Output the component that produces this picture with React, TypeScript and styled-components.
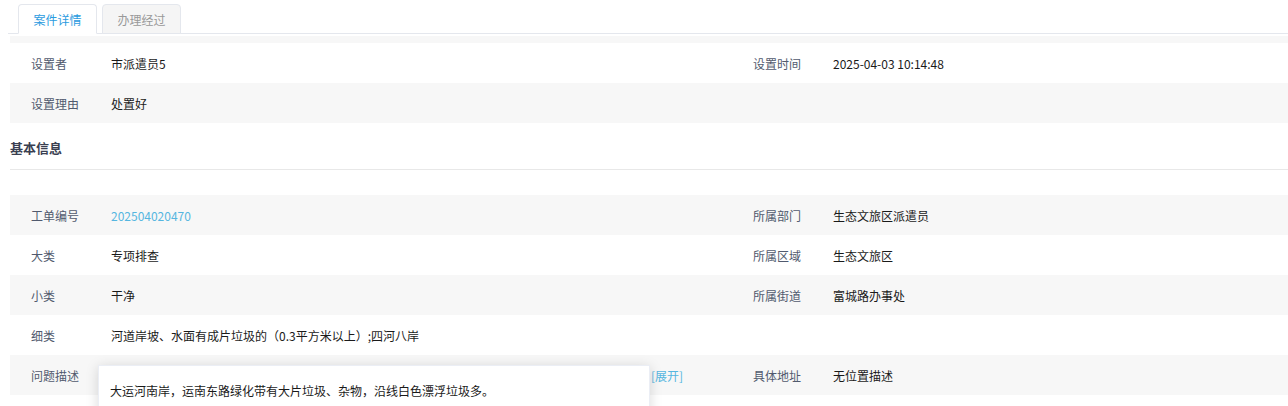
import React from "react";
import styled, { createGlobalStyle } from "styled-components";

const Global = createGlobalStyle`
  html, body { margin: 0; padding: 0; background: #fff; overflow: hidden; }
  body { font-family: "Noto Sans CJK SC", "Noto Sans", sans-serif; font-size: 12px; }
`;

const Page = styled.div`
  position: relative;
  width: 1288px;
  height: 406px;
  overflow: hidden;
`;

const TabBar = styled.div`
  margin-left: 8px;
  height: 33px;
  border-bottom: 1px solid #e4e7ed;
  display: flex;
  align-items: flex-end;
  gap: 5px;
  padding-left: 10px;
`;

const Tab = styled.div<{ $active?: boolean }>`
  box-sizing: border-box;
  width: 79px;
  height: 30px;
  margin-bottom: -1px;
  border: 1px solid #e4e7ed;
  border-bottom-color: ${(p) => (p.$active ? "#fff" : "#e4e7ed")};
  border-radius: 4px 4px 0 0;
  background: ${(p) => (p.$active ? "#fff" : "#f5f5f5")};
  color: ${(p) => (p.$active ? "#2b9be0" : "#999")};
  display: flex;
  align-items: center;
  justify-content: center;
  font-size: 12px;
`;

const Content = styled.div`
  padding-left: 10px;
  padding-top: 2px;
`;

const Strip = styled.div`
  height: 7px;
  background: #f7f7f7;
`;

const Row = styled.div<{ $gray?: boolean }>`
  height: 40px;
  display: grid;
  grid-template-columns: 722px 1fr;
  background: ${(p) => (p.$gray ? "#f7f7f7" : "#fff")};
`;

const Cell = styled.div`
  display: flex;
  align-items: center;
  padding-left: 21px;
`;

const Label = styled.span`
  width: 80px;
  flex: none;
  color: #515a6e;
`;

const Value = styled.span<{ $link?: boolean }>`
  color: ${(p) => (p.$link ? "#55b6e0" : "#1a1a1a")};
  white-space: nowrap;
`;

const DescValue = styled.span`
  width: 572px;
  display: flex;
  justify-content: space-between;
  color: #1a1a1a;
  white-space: nowrap;
`;

const Expand = styled.span`
  color: #55b6e0;
`;

const SectionTitle = styled.div`
  box-sizing: border-box;
  height: 47px;
  padding-top: 3px;
  display: flex;
  align-items: center;
  font-weight: bold;
  font-size: 13px;
  color: #3a3f51;
  border-bottom: 1px solid #e8e8e8;
  margin-bottom: 25px;
`;

const Popup = styled.div`
  position: absolute;
  left: 98px;
  top: 365px;
  width: 552px;
  height: 80px;
  box-sizing: border-box;
  background: #fff;
  border: 1px solid #ebeef5;
  box-shadow: 0 2px 12px rgba(0, 0, 0, 0.15);
  padding: 16px 11px;
  color: #1a1a1a;
  font-size: 12px;
  line-height: 18px;
`;

type Pair = [string, React.ReactNode] | null;

const InfoRow: React.FC<{ gray?: boolean; left: Pair; right?: Pair }> = ({ gray, left, right }) => (
  <Row $gray={gray}>
    <Cell>
      {left && (
        <>
          <Label>{left[0]}</Label>
          {left[1]}
        </>
      )}
    </Cell>
    <Cell>
      {right && (
        <>
          <Label>{right[0]}</Label>
          {right[1]}
        </>
      )}
    </Cell>
  </Row>
);

const desc = "大运河南岸，运南东路绿化带有大片垃圾、杂物，沿线白色漂浮垃圾多。";

export default function App() {
  return (
    <Page>
      <Global />
      <TabBar>
        <Tab $active>案件详情</Tab>
        <Tab>办理经过</Tab>
      </TabBar>
      <Content>
        <Strip />
        <InfoRow left={["设置者", <Value>市派遣员5</Value>]} right={["设置时间", <Value>2025-04-03 10:14:48</Value>]} />
        <InfoRow gray left={["设置理由", <Value>处置好</Value>]} />
        <SectionTitle>基本信息</SectionTitle>
        <InfoRow gray left={["工单编号", <Value $link>202504020470</Value>]} right={["所属部门", <Value>生态文旅区派遣员</Value>]} />
        <InfoRow left={["大类", <Value>专项排查</Value>]} right={["所属区域", <Value>生态文旅区</Value>]} />
        <InfoRow gray left={["小类", <Value>干净</Value>]} right={["所属街道", <Value>富城路办事处</Value>]} />
        <InfoRow left={["细类", <Value>河道岸坡、水面有成片垃圾的（0.3平方米以上）;四河八岸</Value>]} />
        <InfoRow
          gray
          left={["问题描述", <DescValue><span>{desc}</span><Expand>[展开]</Expand></DescValue>]}
          right={["具体地址", <Value>无位置描述</Value>]}
        />
      </Content>
      <Popup>{desc}</Popup>
    </Page>
  );
}
